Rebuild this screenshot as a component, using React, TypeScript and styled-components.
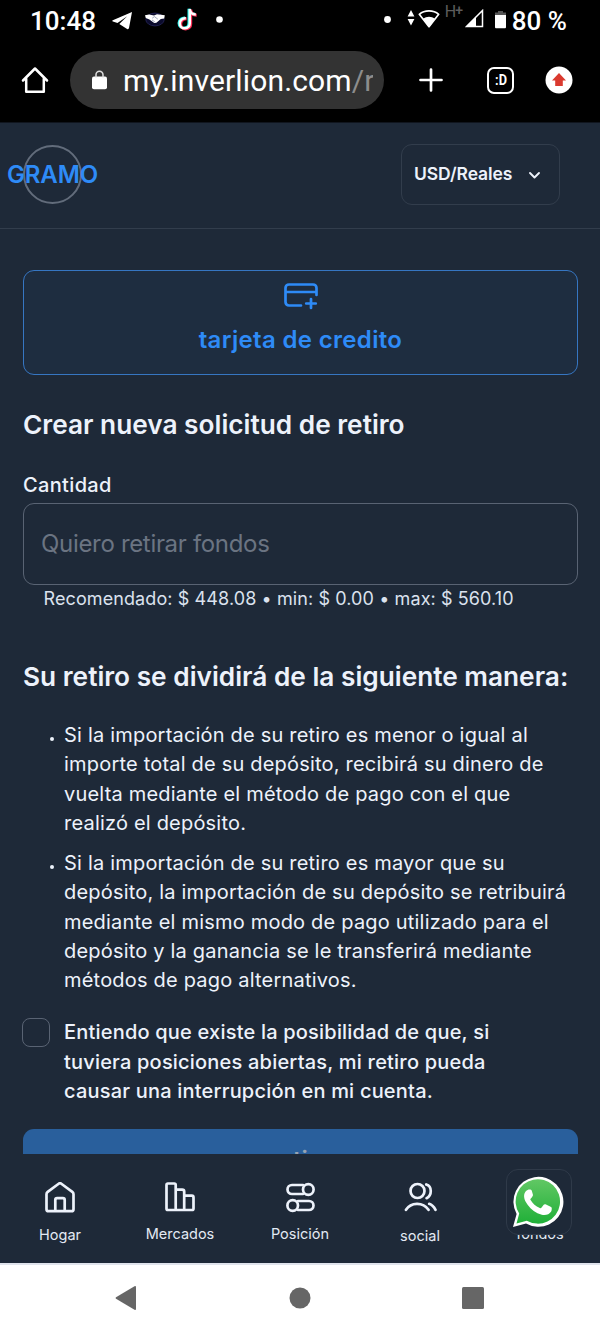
import React from "react";
import styled, { createGlobalStyle } from "styled-components";

const GlobalStyle = createGlobalStyle`
  * { box-sizing: border-box; }
  html, body { margin: 0; padding: 0; background: #1e2938; }
  svg { display: block; flex: none; }
  h2, p, ul { margin: 0; padding: 0; }
`;

const ui = '"Inter", sans-serif';
const system = '"Roboto", sans-serif';

const Screen = styled.div`
  width: 600px;
  height: 1333px;
  overflow: hidden;
  display: flex;
  flex-direction: column;
  background: #1e2938;
  color: #edf2fb;
  font-family: ${ui};
`;

const StatusBar = styled.div`
  height: 41px;
  flex: none;
  display: flex;
  justify-content: space-between;
  padding: 0 33px 0 30px;
  background: #000;
  color: #fff;
  font-family: ${system};
`;

const StatusGroup = styled.div`
  display: flex;
  align-items: center;
`;

const StatusText = styled.span<{ $left?: number }>`
  margin-left: ${(p) => p.$left ?? 0}px;
  padding-top: 1px;
  font-size: 26px;
  font-weight: 500;
  line-height: 41px;
  white-space: nowrap;
`;

const Glyph = styled.span<{ $left: number; $top?: number }>`
  align-self: flex-start;
  margin-left: ${(p) => p.$left}px;
  margin-top: ${(p) => p.$top ?? 0}px;
`;

const NetworkType = styled(Glyph)`
  display: flex;
  width: 18px;
  font-size: 16px;
  line-height: 16px;
  color: #5c5c5c;
  span {
    margin: -2px 0 0 -1px;
    font-size: 14px;
    font-weight: 500;
  }
`;

const BrowserBar = styled.div`
  height: 82px;
  flex: none;
  display: flex;
  align-items: flex-start;
  padding: 10px 27px 0 21px;
  background: #000;
  border-bottom: 1px solid #10151e;
`;

const BrowserButton = styled.div<{ $left: number }>`
  height: 58px;
  display: flex;
  align-items: center;
  margin-left: ${(p) => p.$left}px;
`;

const AddressPill = styled.div`
  width: 314px;
  height: 58px;
  margin-left: 21px;
  padding-left: 22px;
  display: flex;
  align-items: center;
  gap: 16px;
  border-radius: 29px;
  background: #333;
  color: #fff;
  overflow: hidden;
`;

const Address = styled.span`
  width: 250px;
  overflow: hidden;
  font-family: ${system};
  font-size: 30px;
  line-height: 58px;
  padding-top: 2px;
  letter-spacing: 0.15px;
  white-space: nowrap;
  span { color: #8d8d8d; }
`;

const TabCount = styled.div`
  width: 27px;
  height: 27px;
  display: flex;
  align-items: center;
  justify-content: center;
  border: 2.5px solid #fff;
  border-radius: 7px;
  color: #fff;
  font: 700 15px/20px ${system};
  span { transform: scaleX(0.85); }
`;

const Header = styled.header`
  height: 106px;
  flex: none;
  display: flex;
  align-items: flex-start;
  justify-content: space-between;
  padding: 21px 40px 0 23px;
  border-bottom: 1px solid #323d4c;
`;

const Logo = styled.div`
  width: 59px;
  height: 59px;
  margin-top: 1px;
  display: flex;
  align-items: center;
  justify-content: center;
  border: 2px solid #626c7b;
  border-radius: 50%;
  color: #2e8bf7;
  font-size: 24px;
  font-weight: 600;
  letter-spacing: -0.1px;
`;

const Currency = styled.div`
  width: 159px;
  height: 61px;
  display: flex;
  align-items: center;
  gap: 16px;
  padding: 0 0 2px 12px;
  border: 1px solid #323d4c;
  border-radius: 11px;
  font-size: 17.5px;
  font-weight: 600;
  letter-spacing: -0.08px;
  white-space: nowrap;
  svg { margin-top: 3px; }
`;

const Main = styled.main`
  height: 925px;
  flex: none;
  overflow: hidden;
  padding: 41px 22px 0 23px;
`;

const MethodCard = styled.div`
  height: 105px;
  display: flex;
  flex-direction: column;
  align-items: center;
  padding-top: 12px;
  border: 1px solid #3676c2;
  border-radius: 11px;
  background: #1e2d40;
  color: #2e8bf7;
`;

const MethodName = styled.span`
  margin-top: 15px;
  font-size: 24px;
  line-height: 30px;
  font-weight: 600;
  letter-spacing: 0.33px;
`;

const Title = styled.h2<{ $top: number }>`
  margin-top: ${(p) => p.$top}px;
  font-size: 26.25px;
  line-height: 32px;
  font-weight: 600;
  white-space: nowrap;
`;

const Label = styled.div`
  margin-top: 32px;
  font-size: 20px;
  line-height: 24px;
  font-weight: 500;
  letter-spacing: 0.35px;
`;

const Field = styled.div`
  height: 82px;
  margin-top: 6px;
  padding-left: 17px;
  border: 1px solid #596373;
  border-radius: 11px;
  color: #6b7482;
  font-size: 24px;
  line-height: 80px;
  letter-spacing: -0.32px;
`;

const Hint = styled.div`
  margin: 2px 0 0 20.5px;
  font-size: 18px;
  line-height: 24px;
  letter-spacing: 0.1px;
  white-space: nowrap;
  color: #dbe2ee;
`;

const Rules = styled.ul`
  margin-top: 28px;
  list-style: none;
`;

const Rule = styled.li`
  display: flex;
  margin-bottom: 11px;
  padding-left: 27px;
  font-size: 20px;
  line-height: 29.25px;
`;

const Bullet = styled.span`
  width: 4px;
  height: 4px;
  flex: none;
  margin: 16px 10px 0 0;
  border-radius: 50%;
  background: #edf2fb;
`;

const Line = styled.span`
  display: block;
  white-space: nowrap;
  letter-spacing: 0.2px;
`;

const Consent = styled.label`
  display: flex;
  margin: 23px 0 0 -1px;
  gap: 14px;
  font-size: 20px;
  line-height: 29.25px;
  font-weight: 500;
`;

const Checkbox = styled.span`
  width: 28px;
  height: 29px;
  border: 1.5px solid #596373;
  border-radius: 8px;
`;

const Submit = styled.button`
  display: block;
  width: 555px;
  height: 60px;
  margin-top: 23px;
  padding: 2px 0 0;
  border: 0;
  border-radius: 11px;
  background: #295f9c;
  color: #97a3b3;
  font: 600 24px/30px ${ui};
`;

const TabBar = styled.nav`
  position: relative;
  height: 109px;
  flex: none;
  display: grid;
  grid-template-columns: repeat(5, 120px);
  background: #1e2938;
`;

const Tab = styled.div<{ $drop?: number }>`
  display: flex;
  flex-direction: column;
  align-items: center;
  padding-top: 27.5px;
  span {
    margin-top: ${(p) => 10 + (p.$drop ?? 0)}px;
    font-size: 14.5px;
    line-height: 20px;
    color: #e3e9f3;
  }
`;

const ChatBadge = styled.div`
  position: absolute;
  left: 506px;
  top: 15px;
  width: 66px;
  height: 66px;
  display: flex;
  align-items: center;
  justify-content: center;
  padding-right: 2px;
  border: 1px solid #2f3a49;
  border-radius: 12px;
  background: #1e2938;
`;

const SystemNav = styled.div`
  height: 70px;
  flex: none;
  display: flex;
  align-items: center;
  justify-content: space-between;
  padding: 0 116px 2px 115px;
  border-top: 2px solid #dfe3ec;
  background: #fff;
`;

const line = {
  fill: "none",
  stroke: "currentColor",
  strokeLinecap: "round" as const,
  strokeLinejoin: "round" as const,
};

function StatusIcons() {
  return (
    <StatusBar>
      <StatusGroup>
        <StatusText>10:48</StatusText>
        <Glyph $left={16} $top={11}>
          <svg width="21" height="19" viewBox="0 0 21 19"><path d="M20 1 .8 9.2c-.7.3-.6 1 .1 1.3l4.6 1.4 9.7-6.6-7.9 7.6 7.8 5c.9.6 1.6.3 1.9-.8Z" fill="#fff" /></svg>
        </Glyph>
        <Glyph $left={12} $top={12}>
          <svg width="20" height="15" viewBox="0 0 20 15">
            <ellipse cx="10" cy="7.5" rx="9.2" ry="6.4" fill="#0b0b2c" stroke="#20204f" />
            <path d="M0 3.200 4 2.400l5 1.100 3-1.300 4 .6 3.800.4-.6 3.200-3.400.7-4.400 3.600-2.200.2-4.800-3.400L.8 6Z" fill="#fff" />
            <path d="m7.200 6.200 2.200-1.600 3.500 2.600M7 8l2.800 1.800" fill="none" stroke="#8e94ad" strokeWidth=".8" />
          </svg>
        </Glyph>
        <Glyph $left={12} $top={8}>
          <svg width="21" height="23" viewBox="0 0 21 23">
            <g fill="none" strokeWidth="3">
              <path d="M8.600 10.300c-3-.3-6 1.900-6 5.100 0 3 2.300 4.900 5 4.900 3 0 5-2 5-5V1c.2 3.400 2.700 5.400 6 5.600" stroke="#25f4ee" transform="translate(-.6 -.3)" />
              <path d="M8.600 10.300c-3-.3-6 1.900-6 5.100 0 3 2.300 4.900 5 4.900 3 0 5-2 5-5V1c.2 3.400 2.700 5.400 6 5.600" stroke="#fe2c55" transform="translate(1.100 .6)" />
              <path d="M8.600 10.300c-3-.3-6 1.900-6 5.100 0 3 2.300 4.900 5 4.900 3 0 5-2 5-5V1c.2 3.400 2.700 5.400 6 5.600" stroke="#fff" strokeWidth="2.500" transform="translate(.2 0)" />
            </g>
          </svg>
        </Glyph>
        <Glyph $left={18} $top={16}>
          <svg width="7" height="7"><circle cx="3.500" cy="3.500" r="3.300" fill="#fff" /></svg>
        </Glyph>
      </StatusGroup>
      <StatusGroup>
        <Glyph $left={0} $top={16}>
          <svg width="7" height="7"><circle cx="3.500" cy="3.500" r="3.400" fill="#fff" /></svg>
        </Glyph>
        <Glyph $left={16} $top={10}>
          <svg width="8" height="16"><path d="m4 0 3.400 6.500H.6ZM4 15.500.6 9h6.800Z" fill="#fff" /></svg>
        </Glyph>
        <Glyph $left={3} $top={9}>
          <svg width="22" height="20" viewBox="0 0 22 20">
            <path d="M1.300 5.300C6.600.7 15.400.7 20.700 5.300L11 17.700Z" fill="none" stroke="#fff" strokeWidth="1.700" strokeLinejoin="round" />
            <path d="M5 9.800c3.600-2.800 8.400-2.800 12 0l-6 8.800Z" fill="#fff" />
          </svg>
        </Glyph>
        <NetworkType $left={5} $top={4}>H<span>+</span></NetworkType>
        <Glyph $left={2} $top={9}>
          <svg width="19" height="19" viewBox="0 0 19 19">
            <path d="M17.500 1.500v16h-16Z" fill="none" stroke="#fff" strokeWidth="1.500" />
            <path d="m11 7.500-10 10h10Z" fill="#fff" />
          </svg>
        </Glyph>
        <Glyph $left={11} $top={11}>
          <svg width="11" height="18" viewBox="0 0 11 18">
            <path d="M3 0h5v1.500h3V5H0V1.500h3Z" fill="#555" />
            <path d="M0 4h11v12.500l-.7.7H.7l-.7-.7Z" fill="#fff" />
          </svg>
        </Glyph>
        <StatusText $left={6}>80 %</StatusText>
      </StatusGroup>
    </StatusBar>
  );
}

function Browser() {
  return (
    <BrowserBar>
      <BrowserButton $left={0}>
        <svg width="28" height="28" viewBox="0 0 28 28" {...line} color="#fff" strokeWidth="2.500">
          <path d="M2 14.500 14 2.500l12 12M5.200 12.500v13.300h17.600V12.500" />
        </svg>
      </BrowserButton>
      <AddressPill>
        <svg width="15" height="20" viewBox="0 0 15 20">
          <rect y="6.500" width="15" height="12.700" rx="2" fill="#fff" />
          <path d="M4 7.500V4.800a3.500 3.500 0 0 1 7 0v2.700" fill="none" stroke="#ddd" strokeWidth="1.500" />
        </svg>
        <Address>my.inverlion.com<span>/r</span></Address>
      </AddressPill>
      <BrowserButton $left={35}>
        <svg width="24" height="24" {...line} color="#fff" strokeWidth="2.700"><path d="M12 1.500v21M1.500 12h21" /></svg>
      </BrowserButton>
      <BrowserButton $left={44}>
        <TabCount><span>:D</span></TabCount>
      </BrowserButton>
      <BrowserButton $left={31}>
        <svg width="28" height="28">
          <circle cx="14" cy="14" r="13.500" fill="#fff" />
          <path d="m14 7 7 7.400h-3.200V20h-7.600v-5.600H7Z" fill="#da3a2f" />
        </svg>
      </BrowserButton>
    </BrowserBar>
  );
}

const rules = [
  [
    "Si la importación de su retiro es menor o igual al",
    "importe total de su depósito, recibirá su dinero de",
    "vuelta mediante el método de pago con el que",
    "realizó el depósito.",
  ],
  [
    "Si la importación de su retiro es mayor que su",
    "depósito, la importación de su depósito se retribuirá",
    "mediante el mismo modo de pago utilizado para el",
    "depósito y la ganancia se le transferirá mediante",
    "métodos de pago alternativos.",
  ],
];

const consent = [
  "Entiendo que existe la posibilidad de que, si",
  "tuviera posiciones abiertas, mi retiro pueda",
  "causar una interrupción en mi cuenta.",
];

const tabs = [
  {
    label: "Hogar",
    drop: 1,
    icon: <path d="M1.500 12.200c0-1 .4-1.800 1.200-2.400L14 1.500a2 2 0 0 1 2 0l11.300 8.300c.8.6 1.200 1.400 1.200 2.400v15c0 1.200-.8 2-2 2h-23c-1.200 0-2-.8-2-2ZM10.300 29V18c0-1.200.6-1.900 1.800-1.900h5.800c1.200 0 1.800.7 1.800 1.900v11" />,
  },
  {
    label: "Mercados",
    drop: 0,
    icon: <path d="M1.500 3c0-.9.5-1.500 1.400-1.500h6.400c.9 0 1.400.6 1.400 1.500v25H2.900c-.9 0-1.400-.6-1.400-1.500ZM10.700 7.600h6.500c1.300 0 2 .6 2 1.800V28h-8.500M19.200 13.700h7.600c1 0 1.700.6 1.700 1.700v11c0 1-.6 1.600-1.600 1.600h-7.700" />,
  },
  {
    label: "Posición",
    drop: 0,
    icon: <><path d="M18 3H7a4.500 4.500 0 0 0 0 9h11M13 19h11a4.500 4.500 0 0 1 0 9H13" /><circle cx="23.300" cy="7.500" r="5.300" /><circle cx="7.700" cy="23.500" r="5.300" /></>,
  },
  {
    label: "social",
    drop: 2,
    icon: <><circle cx="12.500" cy="9" r="7" /><path d="M21.300 2.500c6 1.800 5.800 11 .3 13.700M1 27.800c4.800-7.600 16.800-8.200 22.500 0M24.200 21.800c2.800.9 4.800 3 6.300 6" /></>,
  },
  { label: "fondos", drop: 0, icon: null },
];

export default function App() {
  return (
    <Screen>
      <GlobalStyle />
      <StatusIcons />
      <Browser />
      <Header>
        <Logo>GRAMO</Logo>
        <Currency>
          USD/Reales
          <svg width="13" height="9" {...line} strokeWidth="1.900"><path d="m2 2 4.500 4.500L11 2" /></svg>
        </Currency>
      </Header>
      <Main>
        <MethodCard>
          <svg width="34" height="27" viewBox="0 0 34 27" {...line} strokeWidth="2.700">
            <path d="M17 22.500H5c-2 0-3.500-1.500-3.500-3.500V5C1.500 3 3 1.500 5 1.500h24C31 1.500 32.500 3 32.500 5v7M1.500 9h31M27 16v9M22.200 20.500h9.600" />
          </svg>
          <MethodName>tarjeta de credito</MethodName>
        </MethodCard>
        <Title $top={34}>Crear nueva solicitud de retiro</Title>
        <Label>Cantidad</Label>
        <Field>Quiero retirar fondos</Field>
        <Hint>Recomendado: $ 448.08 • min: $ 0.00 • max: $ 560.10</Hint>
        <Title $top={50}>Su retiro se dividirá de la siguiente manera:</Title>
        <Rules>
          {rules.map((lines) => (
            <Rule key={lines[0]}>
              <Bullet />
              <div>{lines.map((text) => <Line key={text}>{text}</Line>)}</div>
            </Rule>
          ))}
        </Rules>
        <Consent>
          <Checkbox />
          <div>{consent.map((text) => <Line key={text}>{text}</Line>)}</div>
        </Consent>
        <Submit>retiro</Submit>
      </Main>
      <TabBar>
        {tabs.map((tab) => (
          <Tab key={tab.label} $drop={tab.drop}>
            <svg width="34" height="32" viewBox="-2 0 34 32" {...line} strokeWidth="2.700">{tab.icon}</svg>
            <span>{tab.label}</span>
          </Tab>
        ))}
        <ChatBadge>
          <svg width="54" height="54" viewBox="0 0 54 54">
            <defs>
              <linearGradient id="chat" x1="0" y1="0" x2="0" y2="1">
                <stop offset="0" stopColor="#61c764" />
                <stop offset="1" stopColor="#20b038" />
              </linearGradient>
            </defs>
            <path d="M2 52 5.600 39A25 25 0 1 1 15 48.500Z" fill="#fff" />
            <path d="M5.500 48.500 8.200 38.500A22.200 22.200 0 1 1 15.800 45.700Z" fill="url(#chat)" />
            <path d="M20.800 15.700c-.6-1.300-1.200-1.300-1.800-1.300-1.700-.1-2.900.4-4 1.700-1.300 1.500-2.100 3.300-1.900 5.700.2 3 1.700 5.500 3.500 7.900 3.700 5 8 8.500 14.200 10.100 3.800 1 7.600-.5 9.200-3 .7-1.200.9-2.800.7-4.100-.1-.4-.5-.6-1.100-.9l-5.100-2.500c-.8-.3-1.300-.2-1.800.5l-2.300 2.900c-.5.5-.9.6-1.600.3-4.200-1.700-7-4.300-9.200-8-.4-.7-.2-1.100.3-1.600 1-1 1.600-1.800 2-2.800.2-.5.1-.9-.1-1.400Z" fill="#fff" />
          </svg>
        </ChatBadge>
      </TabBar>
      <SystemNav>
        <svg width="22" height="26"><path d="M1 12.300 19.500 1.200q1.500-.8 1.500 1v21.600q0 1.800-1.500 1L1 13.700q-1-.7 0-1.400Z" fill="#666" /></svg>
        <svg width="22" height="22"><circle cx="11" cy="11" r="10.500" fill="#666" /></svg>
        <svg width="22" height="22"><rect width="22" height="22" rx="1.500" fill="#666" /></svg>
      </SystemNav>
    </Screen>
  );
}
